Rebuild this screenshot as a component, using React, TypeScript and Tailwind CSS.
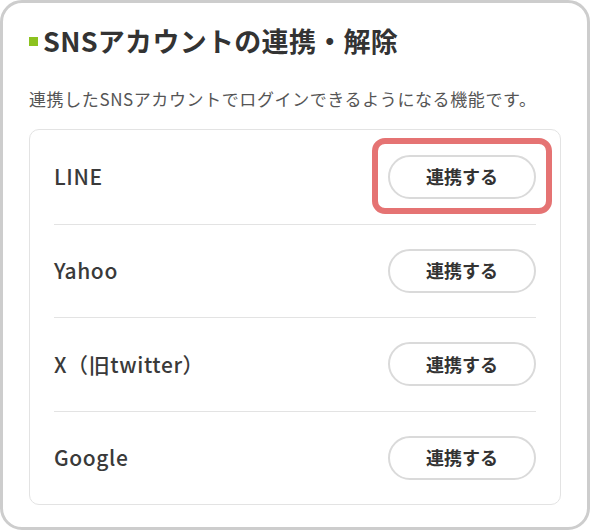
import React from 'react';

const services = ['LINE', 'Yahoo', 'X（旧twitter）', 'Google'];

const font = { fontFamily: '"Noto Sans CJK JP", "Noto Sans", sans-serif' };

export default function App() {
  return (
    <div className="w-[590px] h-[532px] bg-white" style={font}>
      <div className="h-[530px] rounded-[22px] border-[3px] border-[#cdcdcd] bg-white px-[26px] pt-[18px]">
        {/* Heading */}
        <div className="flex items-center gap-[5px]">
          <span className="block w-[9px] h-[9px] bg-[#8cc21f]" />
          <h2 className="text-[27px] font-bold leading-[40px] tracking-[0.3px] text-[#333]">SNSアカウントの連携・解除</h2>
        </div>

        <p className="mt-[26px] text-[17px] leading-[24px] tracking-[0.6px] text-[#555]">
          連携したSNSアカウントでログインできるようになる機能です。
        </p>

        {/* Account list */}
        <div className="mt-[18px] rounded-[10px] border border-[#e3e3e3] px-6">
          {services.map((name, i) => (
            <div
              key={name}
              className={
                'relative flex h-[93.5px] items-center justify-between' +
                (i > 0 ? ' border-t border-[#e3e3e3]' : '')
              }
            >
              <span className="text-[21px] font-medium tracking-[0.6px] text-[#3a3a3a]">{name}</span>
              <button className="flex h-[44px] w-[148px] items-center justify-center rounded-full border-2 border-[#dadada] bg-white text-[18px] font-bold text-[#333]">
                連携する
              </button>
              {i === 0 && (
                <span className="pointer-events-none absolute right-[-16px] top-[8px] h-[76px] w-[180px] rounded-[13px] border-[6px] border-[#e57373]" />
              )}
            </div>
          ))}
        </div>
      </div>
    </div>
  );
}
